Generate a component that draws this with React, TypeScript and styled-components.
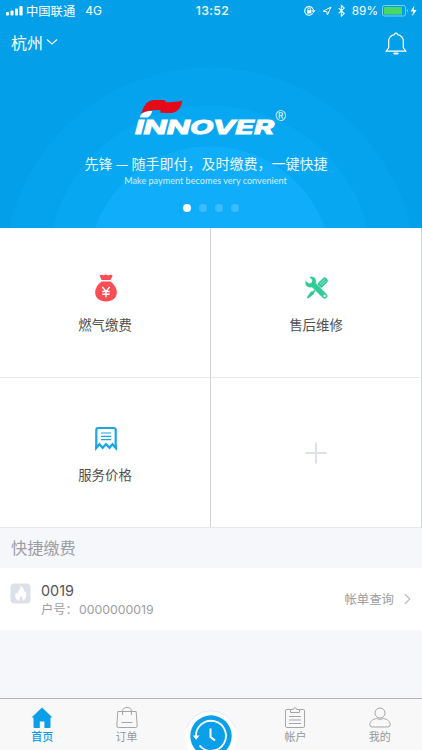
import React from 'react';
import styled, { createGlobalStyle } from 'styled-components';

const Global = createGlobalStyle`
  *, *::before, *::after { box-sizing: border-box; }
  body { margin: 0; background: #f5f7fb; overflow: hidden; }
  svg { display: block; flex: none; }
`;

const cjk = `"Noto Sans CJK SC", sans-serif`;
const latin = `Inter, "Noto Sans CJK SC", sans-serif`;

const Screen = styled.main`
  width: 422px;
  height: 750px;
  display: flex;
  flex-direction: column;
  overflow: hidden;
  background: #f5f7fb;
  font-family: ${cjk};
`;

const Hero = styled.header`
  height: 228px;
  flex: none;
  display: flex;
  flex-direction: column;
  color: #fff;
  background:
    radial-gradient(circle at 210px 268px, #10aefa 121px, transparent 122px),
    radial-gradient(circle at 210px 268px, #07a7f2 162px, transparent 163px),
    radial-gradient(circle at 210px 273px, #05a3ee 205px, transparent 206px),
    #039fe9;
`;

const StatusBar = styled.div`
  height: 22px;
  display: grid;
  grid-template-columns: 1fr auto 1fr;
  align-items: center;
  padding: 0 4px 0 6px;
  font-family: ${latin};
`;

const StatusGroup = styled.div<{ $end?: boolean }>`
  display: flex;
  align-items: center;
  justify-content: ${p => (p.$end ? 'flex-end' : 'flex-start')};
`;

const Carrier = styled.span`
  margin-left: 3px;
  font: 400 12.3px/22px ${cjk};
`;

const Network = styled.span`
  margin-left: 10px;
  font-size: 12px;
  line-height: 22px;
`;

const Clock = styled.span`
  padding-left: 1px;
  font-size: 12.3px;
  font-weight: 500;
  line-height: 22px;
  letter-spacing: 0.4px;
`;

const Percent = styled.span`
  margin: 0 4px 0 6px;
  font-size: 11.8px;
  line-height: 22px;
`;

const NavBar = styled.div`
  height: 44px;
  display: flex;
  align-items: center;
  justify-content: space-between;
  padding: 0 15px 0 11px;
`;

const City = styled.div`
  display: flex;
  align-items: center;
  gap: 3px;
  font-size: 16px;
  line-height: 24px;
  padding-bottom: 5px;
`;

const Banner = styled.section`
  flex: 1;
  display: flex;
  flex-direction: column;
  align-items: center;
  padding-top: 31px;
`;

const Slogan = styled.p`
  margin: 16px 0 0;
  padding-right: 10px;
  font-size: 14px;
  line-height: 20px;
  white-space: nowrap;
  opacity: 0.92;
`;

const SubSlogan = styled.p`
  margin: 0;
  padding-right: 11px;
  font: 400 9.1px/15px Lato, sans-serif;
  white-space: nowrap;
  opacity: 0.8;
`;

const Dots = styled.div`
  display: flex;
  gap: 8.3px;
  margin-top: 16px;
`;

const Dot = styled.span<{ $active?: boolean }>`
  width: 8px;
  height: 8px;
  border-radius: 50%;
  background: ${p => (p.$active ? '#fff' : '#3dbcfb')};
`;

const Services = styled.section`
  height: 300px;
  flex: none;
  display: grid;
  grid-template: 150px 150px / 211px 211px;
`;

const Service = styled.div`
  display: flex;
  flex-direction: column;
  align-items: center;
  padding-top: 45px;
  padding-left: 1px;
  background: #fff;
  border-right: 1px solid #d3d4d7;
  border-bottom: 1px solid #e8e9ec;
`;

const ServiceLabel = styled.span`
  margin-top: 11px;
  padding-right: 1px;
  font-size: 13.4px;
  line-height: 20px;
  color: #505050;
`;

const PlusWrap = styled.div`
  margin-top: 19px;
  padding-right: 2px;
`;

const SectionTitle = styled.h2`
  margin: 0;
  height: 40px;
  flex: none;
  padding-left: 11px;
  font-size: 16.2px;
  font-weight: 400;
  line-height: 38px;
  color: #9c9ea3;
`;

const AccountRow = styled.div`
  height: 62px;
  flex: none;
  display: flex;
  padding: 0 11px 0 10px;
  background: #fff;
`;

const FlameBadge = styled.div`
  margin: 15px 10px 0 0;
`;

const AccountInfo = styled.div`
  flex: 1;
  padding-top: 13px;
  font-family: ${latin};
`;

const AccountName = styled.div`
  font-size: 14.4px;
  line-height: 20px;
  color: #555;
`;

const AccountNumber = styled.div`
  display: flex;
  font-size: 12.3px;
  line-height: 17px;
  color: #9c9ea3;
`;

const NumberLabel = styled.span`
  width: 38px;
  font-family: ${cjk};
`;

const BillLink = styled.div`
  display: flex;
  align-items: center;
  gap: 10px;
  font-size: 12.4px;
  color: #9c9ea3;
`;

const Filler = styled.div`
  flex: 1;
`;

const TabBar = styled.nav`
  height: 52px;
  flex: none;
  display: grid;
  grid-template-columns: repeat(5, 1fr);
  background: #f8f8f8;
  border-top: 1px solid #b5b6bb;
`;

const Tab = styled.div<{ $active?: boolean }>`
  display: flex;
  flex-direction: column;
  align-items: center;
  padding-top: 8px;
  overflow: hidden;
  color: ${p => (p.$active ? '#0a9fe8' : '#97979b')};
`;

const TabLabel = styled.span<{ $active?: boolean }>`
  font-size: 11px;
  font-weight: ${p => (p.$active ? 500 : 400)};
  line-height: 15px;
`;

const CenterTab = styled.div`
  display: flex;
  justify-content: center;
  padding-top: 10px;
  height: 51px;
  overflow: hidden;
`;

const Signal = () => (
  <svg width="17" height="10" viewBox="0 0 17 10" fill="#fff">
    <rect x="0" y="6" width="3" height="3.5" rx=".8" />
    <rect x="4.5" y="4.5" width="3" height="5" rx=".8" />
    <rect x="9" y="2.5" width="3" height="7" rx=".8" />
    <rect x="13.4" y="0" width="3.2" height="9.5" rx=".8" />
  </svg>
);

const StatusIcons = () => (
  <svg width="43" height="14" viewBox="0 0 43 14" fill="none" stroke="#fff">
    <path d="M9.8 9.2A4.4 4.4 0 1 1 10.4 6" strokeWidth="1.1" />
    <path d="M8.5 6.3h4L10.5 9z" fill="#fff" stroke="none" />
    <rect x="4" y="6.2" width="4.4" height="3.3" fill="#fff" stroke="none" />
    <path d="M4.8 6.5V5.3a1.4 1.4 0 0 1 2.8 0v1.2" strokeWidth=".9" />
    <path d="M20 7.4 28 3l-3.6 8-.7-3.5z" strokeWidth="1" strokeLinejoin="round" />
    <path d="m35.7 4.2 5.5 5.4-2.8 2.5V1.5l2.8 2.6-5.5 5.3" strokeWidth="1.1" />
  </svg>
);

const Battery = () => (
  <svg width="36" height="14" viewBox="0 0 36 14">
    <rect x=".5" y="1.5" width="23" height="10.5" rx="2" fill="none" stroke="#7bd0f7" />
    <rect x="2" y="3" width="18" height="7.5" rx=".6" fill="#4bd763" />
    <path d="M25 5v3.5c1.4-.4 1.4-3.1 0-3.5z" fill="#7bd0f7" />
    <path d="M32.3 1.6 28.6 7.6h2.6L30 12.4l4.6-6.3h-2.7z" fill="#fff" />
  </svg>
);

const Bell = () => (
  <svg width="22" height="24" viewBox="0 0 22 24" fill="none" stroke="#fff" strokeWidth="1.2" strokeLinecap="round" strokeLinejoin="round">
    <path d="M9.5 2.6a1.5 1.5 0 0 1 3 0c3.9.8 5.8 3.4 5.800 7v6.200l2.500 3.400H1.200l2.500-3.400V9.600c0-3.600 1.900-6.200 5.800-7z" />
    <path d="M9.3 21.5h3.4" strokeWidth="1.8" />
  </svg>
);

const Logo = () => (
  <svg width="160" height="40" viewBox="132 97 160 40">
    <path d="M142.500 113.200c2.200-7.600 5.600-12.400 11-13 5-.6 8.500-.1 12.500 0l.3 1.800c6 .8 11-.3 17.200-1.200-1.600 6.400-4 10.800-9.400 11.900-4.600.9-8-.2-12.600.2v-2.700c-7-.4-13.500.4-19 3z" fill="#e50a17" />
    <path d="M140.900 117.600c.4-4.200 5-6.600 12.400-6.500-.8 3.300-2.500 5.700-5 6.500z" fill="#fff" />
    <text x="136" y="133.600" textLength="139" lengthAdjust="spacingAndGlyphs" fill="#fff" stroke="#fff" strokeWidth="1" fontFamily="Inter, sans-serif" fontStyle="italic" fontWeight="700" fontSize="19">INNOVER</text>
    <text x="276.500" y="120.800" fill="#fff" fontFamily="Liberation Sans, sans-serif" fontSize="14">®</text>
  </svg>
);

const MoneyBag = () => (
  <svg width="24" height="30" viewBox="0 0 24 30">
    <path d="M5.600 2.600q2-1.800 4 0 2.200-2.200 4.600 0 2.200-1.800 4.500 0L16.500 7h-9z" fill="#fb4d55" />
    <path d="M7.500 8.600h9c4.300 3 6.300 7 6.300 11 0 5.600-4.300 8.900-10.800 8.900S1.200 25.200 1.200 19.600c0-4 2-8 6.300-11z" fill="#fb4d55" />
    <path d="m8.300 14 3.700 4.400 3.700-4.400M8.300 18.500h7.400M8.300 21.200h7.400M12 18.300v6" fill="none" stroke="#fff" strokeWidth="1.400" />
  </svg>
);

const Tools = () => (
  <svg width="24" height="30" viewBox="0 0 24 30">
    <g transform="translate(12 15.300) rotate(45)">
      <rect x="-3" y="-13.800" width="6" height="11.500" rx="2.500" fill="#31cb96" />
      <path d="M-1-12v7M1-12v7" stroke="#c8f1e3" strokeWidth=".6" />
      <path d="M-.9-3H.9v8l1 1.500-1 7h-1.800l-1-7 1-1.500z" fill="#31cb96" />
    </g>
    <g transform="translate(12 15.300) rotate(-45)">
      <path d="M-2.400-13.700V-9.500L0-8l2.400-1.500v-4.200C5.600-12.400 6.600-9.500 5.500-7 5-5.600 3.900-4.800 2.900-4.200v15a2.900 2.900 0 0 1-5.800 0v-15c-1-.6-2.100-1.400-2.600-2.800-1.100-2.500-.1-5.400 3.100-6.700z" fill="#31cb96" stroke="#fff" strokeWidth=".5" />
      <circle cy="10.700" r="1.200" fill="#fff" />
    </g>
  </svg>
);

const Receipt = () => (
  <svg width="24" height="30" viewBox="0 0 24 30" fill="none" stroke="#1ba4e8">
    <path d="M2.300 25V7q0-2 2-2h15.400q2 0 2 2v18l-3.200-3.800-3.100 3.600-3.400-3.600-3.400 3.600-3.100-3.600z" strokeWidth="2.200" />
    <path d="M1.200 23v4l3.200-3.500zM22.800 23v4l-3.200-3.500z" fill="#1ba4e8" stroke="none" />
    <path d="M7 10h10M7 13.300h10M7 16.600h10" strokeWidth="1.200" />
  </svg>
);

const Plus = () => (
  <svg width="22" height="22" viewBox="0 0 22 22" stroke="#dfe1e9" strokeWidth="2">
    <path d="M.5 11h21M11 .5v21" />
  </svg>
);

const Flame = () => (
  <svg width="21" height="21" viewBox="0 0 21 21">
    <rect x=".5" y=".5" width="20" height="20" rx="4" fill="#dce0e9" />
    <path d="M10.800 2.500c2.900 2 3.500 4.500 2.900 7 .9-.4 1.300-1.200 1.400-2.200 2.300 4.900 1 9-2.600 10.700.6-2.300-.1-4-1.700-5.400-.2 1.900-1.800 2.900-1.100 5.400-4.500-1.500-5.600-5.300-3.500-9 .3 1.100.8 1.700 1.600 2C7.400 7.700 10.500 6.200 10.800 2.500z" fill="#fff" />
  </svg>
);

const HomeIcon = () => (
  <svg width="22" height="22" viewBox="0 0 22 22" fill="#0a9fe8">
    <path d="M11 .5 21.500 10.500H19.500V20q0 1-1 1h-5.100v-6.500H8.800V21H3.500q-1 0-1-1v-9.500H.5z" />
  </svg>
);

const BagIcon = () => (
  <svg width="22" height="22" viewBox="0 0 22 22" fill="none" stroke="#a5a5a9">
    <path d="M1.800 4.500h18.400l1 14.500q0 1.500-1.500 1.500H2.300Q.8 20.500.8 19zM6.600 8V4.200a4.400 3.700 0 0 1 8.800 0V8M5.500 15.500h11" />
  </svg>
);

const ClipboardIcon = () => (
  <svg width="22" height="22" viewBox="0 0 22 22" fill="none" stroke="#a5a5a9">
    <path d="M6.500 2.500H2.800q-1.300 0-1.300 1.300v15.400q0 1.300 1.300 1.300h16.400q1.300 0 1.300-1.300V3.800q0-1.300-1.300-1.300h-3.700M6.500 5.500v-3h2.800a1.700 1.700 0 0 1 3.400 0h2.800v3zM5 9.500h12M5 13h12M5 16.500h12" />
  </svg>
);

const PersonIcon = () => (
  <svg width="22" height="22" viewBox="0 0 22 22" fill="none" stroke="#a5a5a9">
    <circle cx="11" cy="6" r="5" />
    <path d="M7.500 11.500C3.500 12.300.8 14.500.8 17.500q0 2.500 2.500 2.500h15.400q2.500 0 2.500-2.500c0-3-2.700-5.200-6.700-6-2.300 1-4.700 1-7 0z" />
  </svg>
);

const HistoryButton = () => (
  <svg width="54" height="54" viewBox="0 0 54 54" fill="none">
    <circle cx="27" cy="27" r="26" fill="#fff" />
    <path d="M2.500 19a26 26 0 0 1 49 0" stroke="#d4e2f0" strokeWidth=".8" />
    <circle cx="27" cy="27" r="20.700" fill="#0a9fe8" />
    <path d="M12 28A15 15 0 1 1 15.500 36.500" stroke="#fff" strokeWidth="1.800" />
    <path d="m8.800 26.500 3.400 4.200 3.300-4.200z" fill="#fff" />
    <path d="M26.500 19.500v8.500l4.500 3.500" stroke="#fff" strokeWidth="2" />
  </svg>
);

const services = [
  { label: '燃气缴费', Icon: MoneyBag },
  { label: '售后维修', Icon: Tools },
  { label: '服务价格', Icon: Receipt },
];

export default function App() {
  return (
    <>
      <Global />
      <Screen>
        <Hero>
          <StatusBar>
            <StatusGroup>
              <Signal />
              <Carrier>中国联通</Carrier>
              <Network>4G</Network>
            </StatusGroup>
            <Clock>13:52</Clock>
            <StatusGroup $end>
              <StatusIcons />
              <Percent>89%</Percent>
              <Battery />
            </StatusGroup>
          </StatusBar>
          <NavBar>
            <City>
              杭州
              <svg width="12" height="8" viewBox="0 0 12 8" fill="none" stroke="#fff" strokeWidth="1.200">
                <path d="m1 1.500 5 4.500 5-4.500" />
              </svg>
            </City>
            <Bell />
          </NavBar>
          <Banner>
            <Logo />
            <Slogan>先锋 — 随手即付，及时缴费，一键快捷</Slogan>
            <SubSlogan>Make payment becomes very convenient</SubSlogan>
            <Dots>
              <Dot $active />
              <Dot />
              <Dot />
              <Dot />
            </Dots>
          </Banner>
        </Hero>
        <Services>
          {services.map(({ label, Icon }) => (
            <Service key={label}>
              <Icon />
              <ServiceLabel>{label}</ServiceLabel>
            </Service>
          ))}
          <Service>
            <PlusWrap>
              <Plus />
            </PlusWrap>
          </Service>
        </Services>
        <SectionTitle>快捷缴费</SectionTitle>
        <AccountRow>
          <FlameBadge>
            <Flame />
          </FlameBadge>
          <AccountInfo>
            <AccountName>0019</AccountName>
            <AccountNumber>
              <NumberLabel>户号：</NumberLabel>
              0000000019
            </AccountNumber>
          </AccountInfo>
          <BillLink>
            帐单查询
            <svg width="7" height="12" viewBox="0 0 7 12" fill="none" stroke="#b9babf" strokeWidth="1.100">
              <path d="m.8 1 5 5-5 5" />
            </svg>
          </BillLink>
        </AccountRow>
        <Filler />
        <TabBar>
          <Tab $active>
            <HomeIcon />
            <TabLabel $active>首页</TabLabel>
          </Tab>
          <Tab>
            <BagIcon />
            <TabLabel>订单</TabLabel>
          </Tab>
          <CenterTab>
            <HistoryButton />
          </CenterTab>
          <Tab>
            <ClipboardIcon />
            <TabLabel>帐户</TabLabel>
          </Tab>
          <Tab>
            <PersonIcon />
            <TabLabel>我的</TabLabel>
          </Tab>
        </TabBar>
      </Screen>
    </>
  );
}
